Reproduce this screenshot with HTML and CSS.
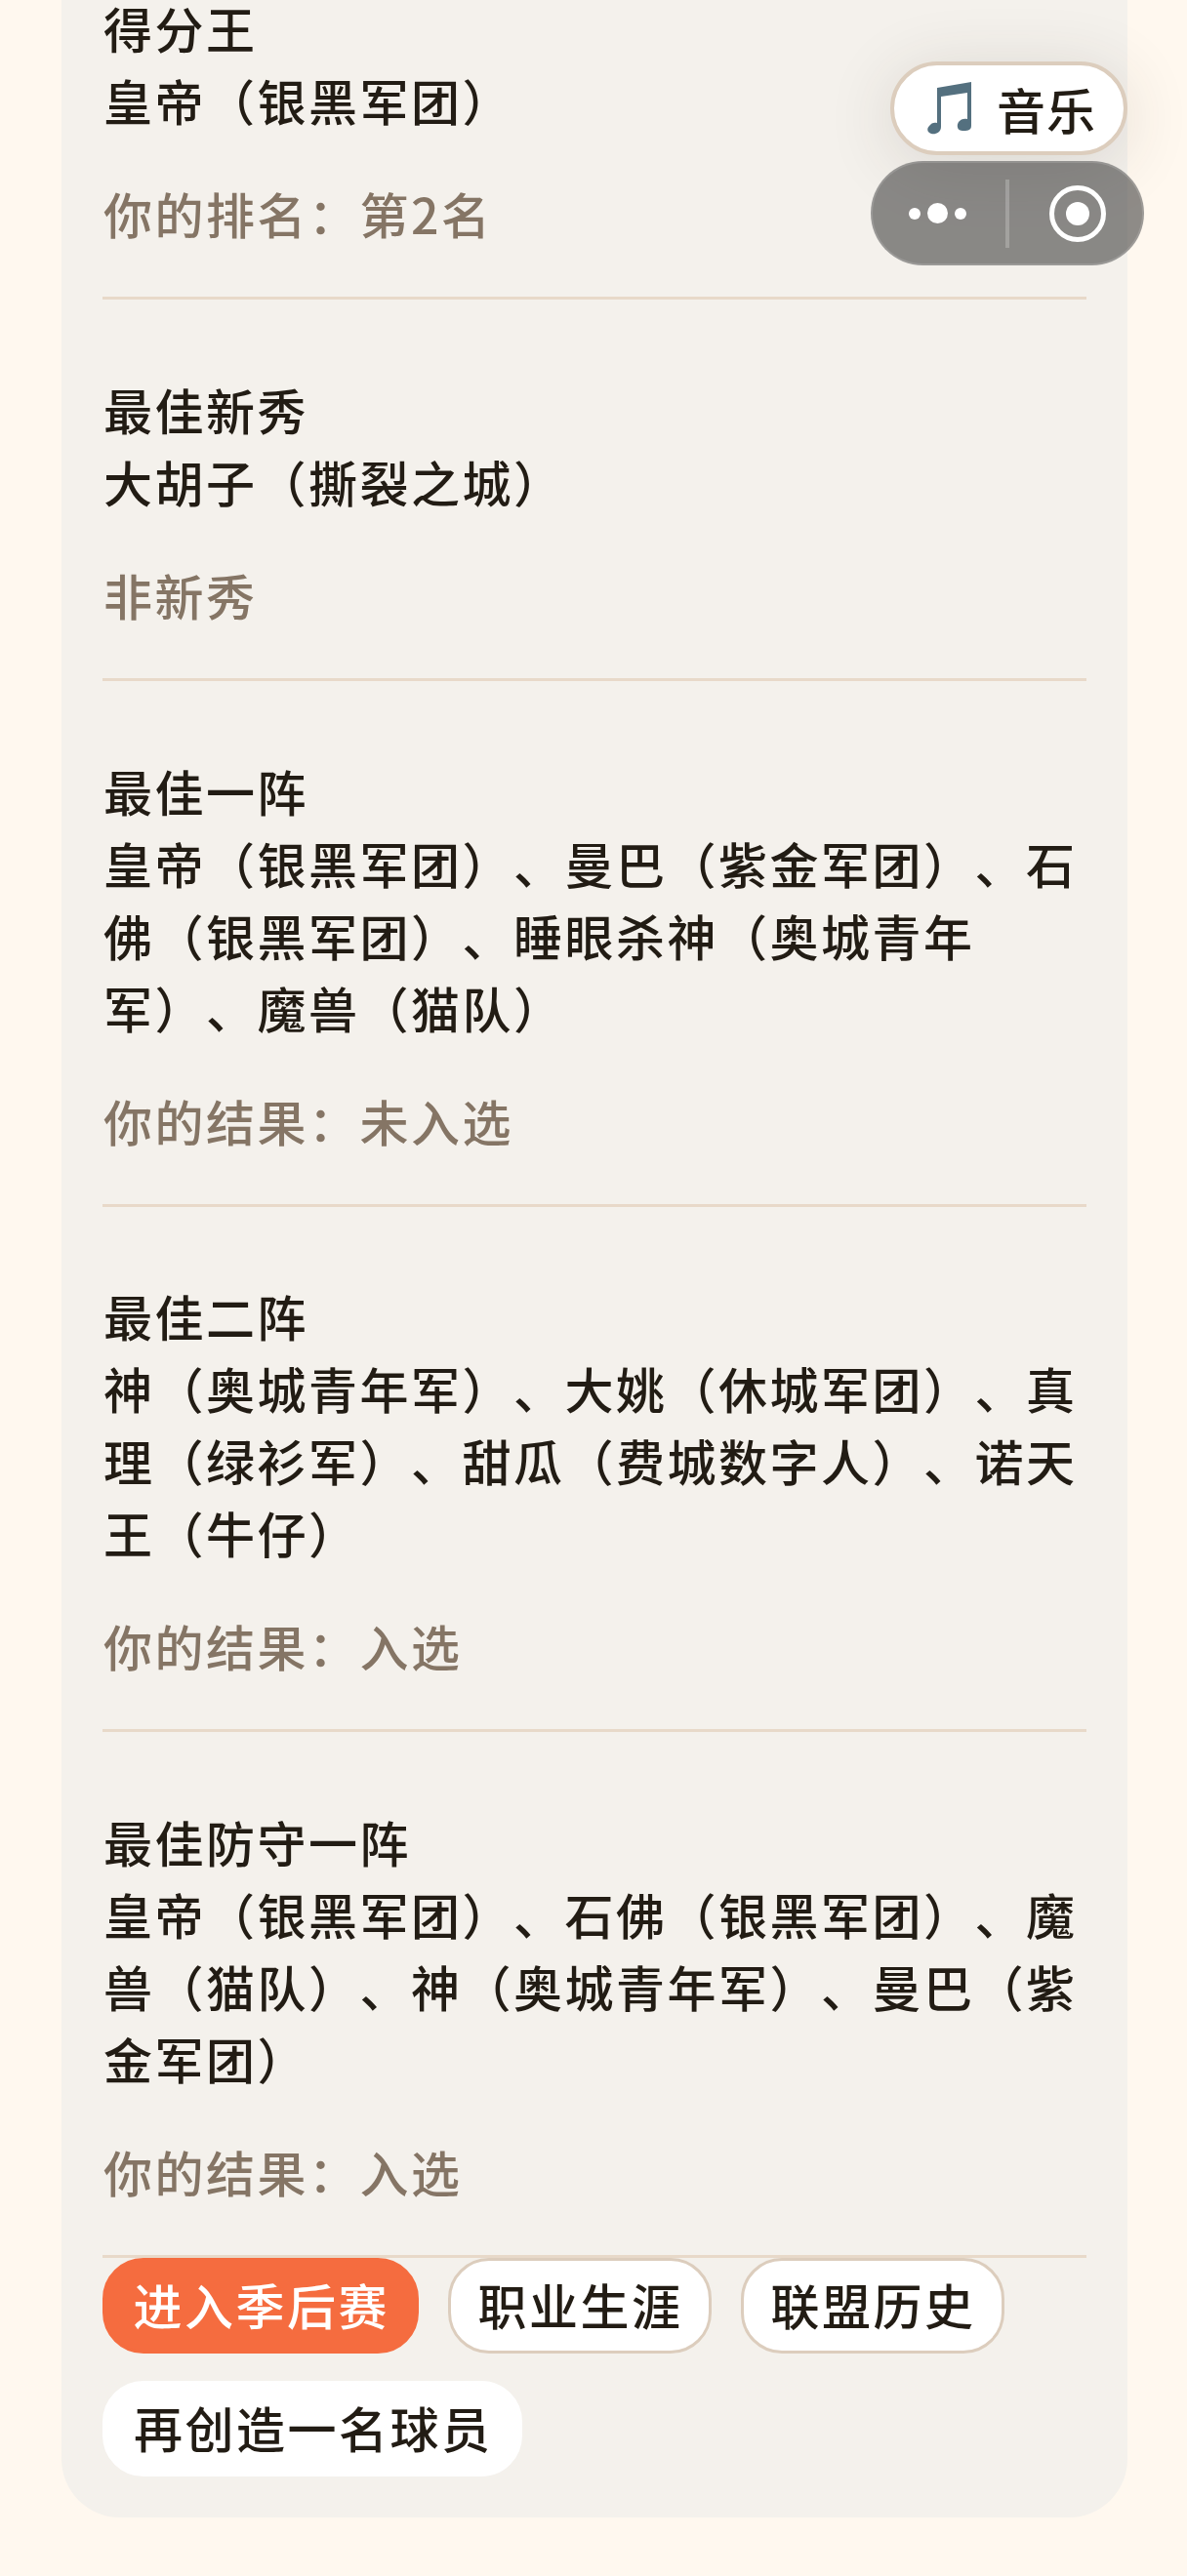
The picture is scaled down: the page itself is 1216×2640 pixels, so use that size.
FILE: index.html
```html
<!DOCTYPE html>
<html lang="zh-CN">
<head>
<meta charset="utf-8">
<title>赛季奖项</title>
<link rel="stylesheet" href="styles.css">
</head>
<body>
<main class="card">
  <section class="award">
    <div class="award-title">得分王</div>
    <div class="award-names">皇帝（银黑军团）</div>
    <div class="award-result">你的排名：第2名</div>
  </section>
  <section class="award">
    <div class="award-title">最佳新秀</div>
    <div class="award-names">大胡子（撕裂之城）</div>
    <div class="award-result">非新秀</div>
  </section>
  <section class="award">
    <div class="award-title">最佳一阵</div>
    <div class="award-names">皇帝（银黑军团）、曼巴（紫金军团）、石佛（银黑军团）、睡眼杀神（奥城青年军）、魔兽（猫队）</div>
    <div class="award-result">你的结果：未入选</div>
  </section>
  <section class="award">
    <div class="award-title">最佳二阵</div>
    <div class="award-names">神（奥城青年军）、大姚（休城军团）、真理（绿衫军）、甜瓜（费城数字人）、诺天王（牛仔）</div>
    <div class="award-result">你的结果：入选</div>
  </section>
  <section class="award">
    <div class="award-title">最佳防守一阵</div>
    <div class="award-names">皇帝（银黑军团）、石佛（银黑军团）、魔兽（猫队）、神（奥城青年军）、曼巴（紫金军团）</div>
    <div class="award-result">你的结果：入选</div>
  </section>
  <div class="actions">
    <button class="btn btn-primary">进入季后赛</button>
    <button class="btn btn-outline">职业生涯</button>
    <button class="btn btn-outline">联盟历史</button>
    <button class="btn btn-plain">再创造一名球员</button>
  </div>
</main>
<button class="music">
  <svg class="music-icon" viewBox="0 0 46 54" width="46" height="54" aria-hidden="true">
    <path fill="#54707f" d="M10 6 45 0V45C45 50 40 50 36 50 30 50 30 44 32 41 34 38 38 37 41 38V11L14 15V46C14 52 8 54 4 53 0 52-1 48 2 45 4 42 7 41 10 42Z"/>
  </svg>
  <span>音乐</span>
</button>
<div class="capsule">
  <div class="capsule-dots">
    <i class="dot"></i><i class="dot dot-big"></i><i class="dot"></i>
  </div>
  <div class="capsule-sep"></div>
  <svg class="capsule-target" viewBox="0 0 58 58" width="58" height="58" aria-hidden="true">
    <circle cx="29" cy="29" r="26.5" fill="none" stroke="#fff" stroke-width="5"/>
    <circle cx="29" cy="29" r="12" fill="#fff"/>
  </svg>
</div>
</body>
</html>
```
FILE: styles.css
```css
* { box-sizing: border-box; }
html, body { margin: 0; padding: 0; height: 2640px; overflow: hidden; }
body {
  background: #fff8ef;
  font-family: "Noto Sans CJK SC", "Noto Sans", sans-serif;
  color: #221c14;
  position: relative;
  text-spacing-trim: space-all;
  font-feature-settings: "palt" 0, "chws" 0;
}
.card {
  width: 1092px;
  margin: -100px 0 0 63px;
  padding: 91px 42px 42px;
  background: #f4f1ec;
  border-radius: 60px;
}
.award {
  padding-bottom: 49px;
  border-bottom: 3px solid #e8d9c9;
  margin-bottom: 74.75px;
  font-size: 50px;
  font-weight: 500;
  line-height: 74px;
  letter-spacing: 2.5px;
}
.award:last-of-type { margin-bottom: 0; }
.award-title, .award-names, .award-result { padding-left: 1px; }
.award-result { margin-top: 42px; color: #857565; }
.actions {
  display: flex;
  flex-wrap: wrap;
  gap: 28px 30px;
}
.btn {
  height: 98px;
  padding: 0 27px 4px 29px;
  border-radius: 42px;
  border: 3px solid transparent;
  font: inherit;
  font-size: 50px;
  font-weight: 500;
  line-height: 1;
  letter-spacing: 2.5px;
  color: #221c14;
  background: #fff;
}
.btn-primary { padding: 0 27px 4px 28.5px; background: #f56c3f; color: #fff; border-color: #f56c3f; }
.btn-outline { padding: 0 26.5px 4px 27.5px; border-color: #dccdbd; }
.btn-plain { border-color: #fff; }
.music {
  position: absolute;
  left: 912px;
  top: 63px;
  width: 243px;
  height: 96px;
  border: 4px solid #dccdbd;
  border-radius: 48px;
  background: #fff;
  box-shadow: 0 10px 70px rgba(60, 50, 40, .14);
  display: flex;
  align-items: center;
  gap: 25px;
  padding: 0 0 0 34px;
  font: inherit;
  font-size: 50px;
  font-weight: 500;
  letter-spacing: 1px;
  color: #221c14;
}
.music-icon { flex: none; }
.capsule {
  position: absolute;
  left: 892px;
  top: 165px;
  width: 280px;
  height: 107px;
  border-radius: 54px;
  background: rgba(50, 50, 50, .55);
  border: 2px solid rgba(255, 255, 255, .14);
  display: flex;
  align-items: center;
}
.capsule-dots {
  display: flex;
  align-items: center;
  gap: 7px;
  margin-left: 37px;
}
.dot { width: 12px; height: 12px; border-radius: 50%; background: #fff; }
.dot-big { width: 21px; height: 21px; }
.capsule-sep {
  width: 4px;
  height: 70px;
  margin-left: 40px;
  background: rgba(255, 255, 255, .22);
}
.capsule-target { margin-left: 41px; flex: none; }
```
